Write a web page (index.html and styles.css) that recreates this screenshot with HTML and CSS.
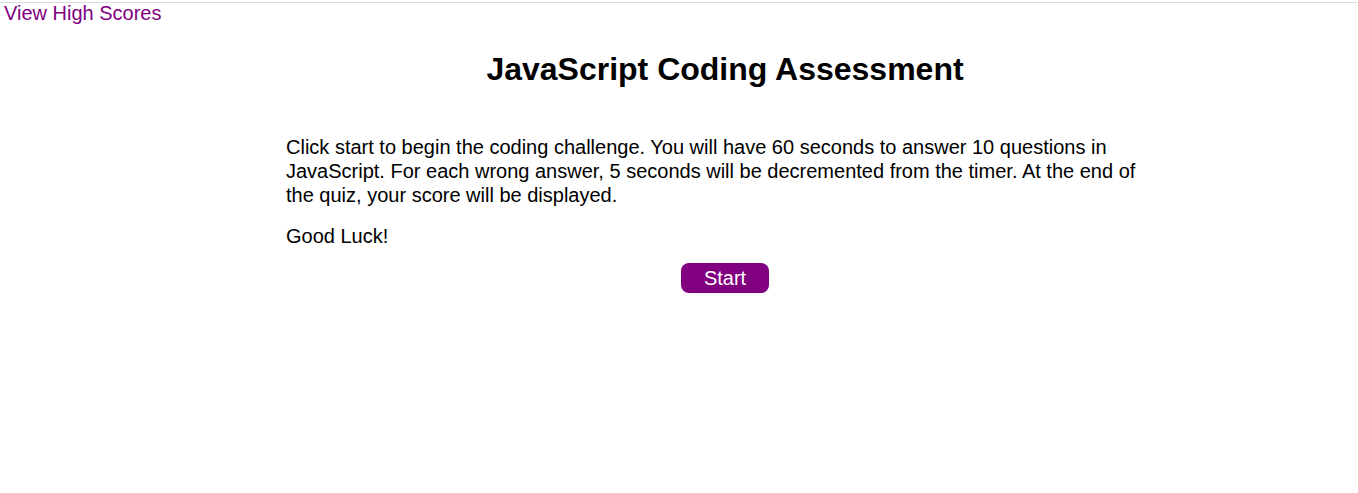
FILE: index.html
```html
<!DOCTYPE html>
<html>
<head>
<meta charset="utf-8">
<title>JavaScript Coding Assessment</title>
<link rel="stylesheet" href="styles.css">
</head>
<body>
<header class="top">
  <a class="scores" href="#">View High Scores</a>
</header>
<main class="quiz">
  <h1 class="title">JavaScript Coding Assessment</h1>
  <p class="intro">Click start to begin the coding challenge. You will have 60 seconds to answer 10 questions in JavaScript. For each wrong answer, 5 seconds will be decremented from the timer. At the end of the quiz, your score will be displayed.</p>
  <p class="intro luck">Good Luck!</p>
  <div class="actions"><button class="start">Start</button></div>
</main>
</body>
</html>
```
FILE: styles.css
```css
html, body {
  margin: 0;
  padding: 0;
  background: #fff;
  font-family: "Liberation Sans", Arial, sans-serif;
  color: #000;
}
.top {
  border-top: 1px solid #dcdcdc;
  margin-top: 2px;
  padding: 0 4px;
  line-height: 21px;
}
.scores {
  font-size: 20px;
  color: #800080;
  text-decoration: none;
  line-height: 21px;
}
.quiz {
  margin-left: 286px;
  width: 878px;
}
.title {
  text-align: center;
  font-size: 32px;
  margin: 26px 0 47px;
  line-height: 37px;
}
.intro {
  font-size: 20px;
  line-height: 24px;
  margin: 0 0 17px;
}
.luck {
  margin-bottom: 15px;
}
.actions {
  display: flex;
  justify-content: center;
}
.start {
  background: #800080;
  color: #fff;
  border: none;
  border-radius: 8px;
  width: 88px;
  height: 30px;
  font-family: "Liberation Sans", Arial, sans-serif;
  font-size: 20px;
  padding: 0;
}
```
